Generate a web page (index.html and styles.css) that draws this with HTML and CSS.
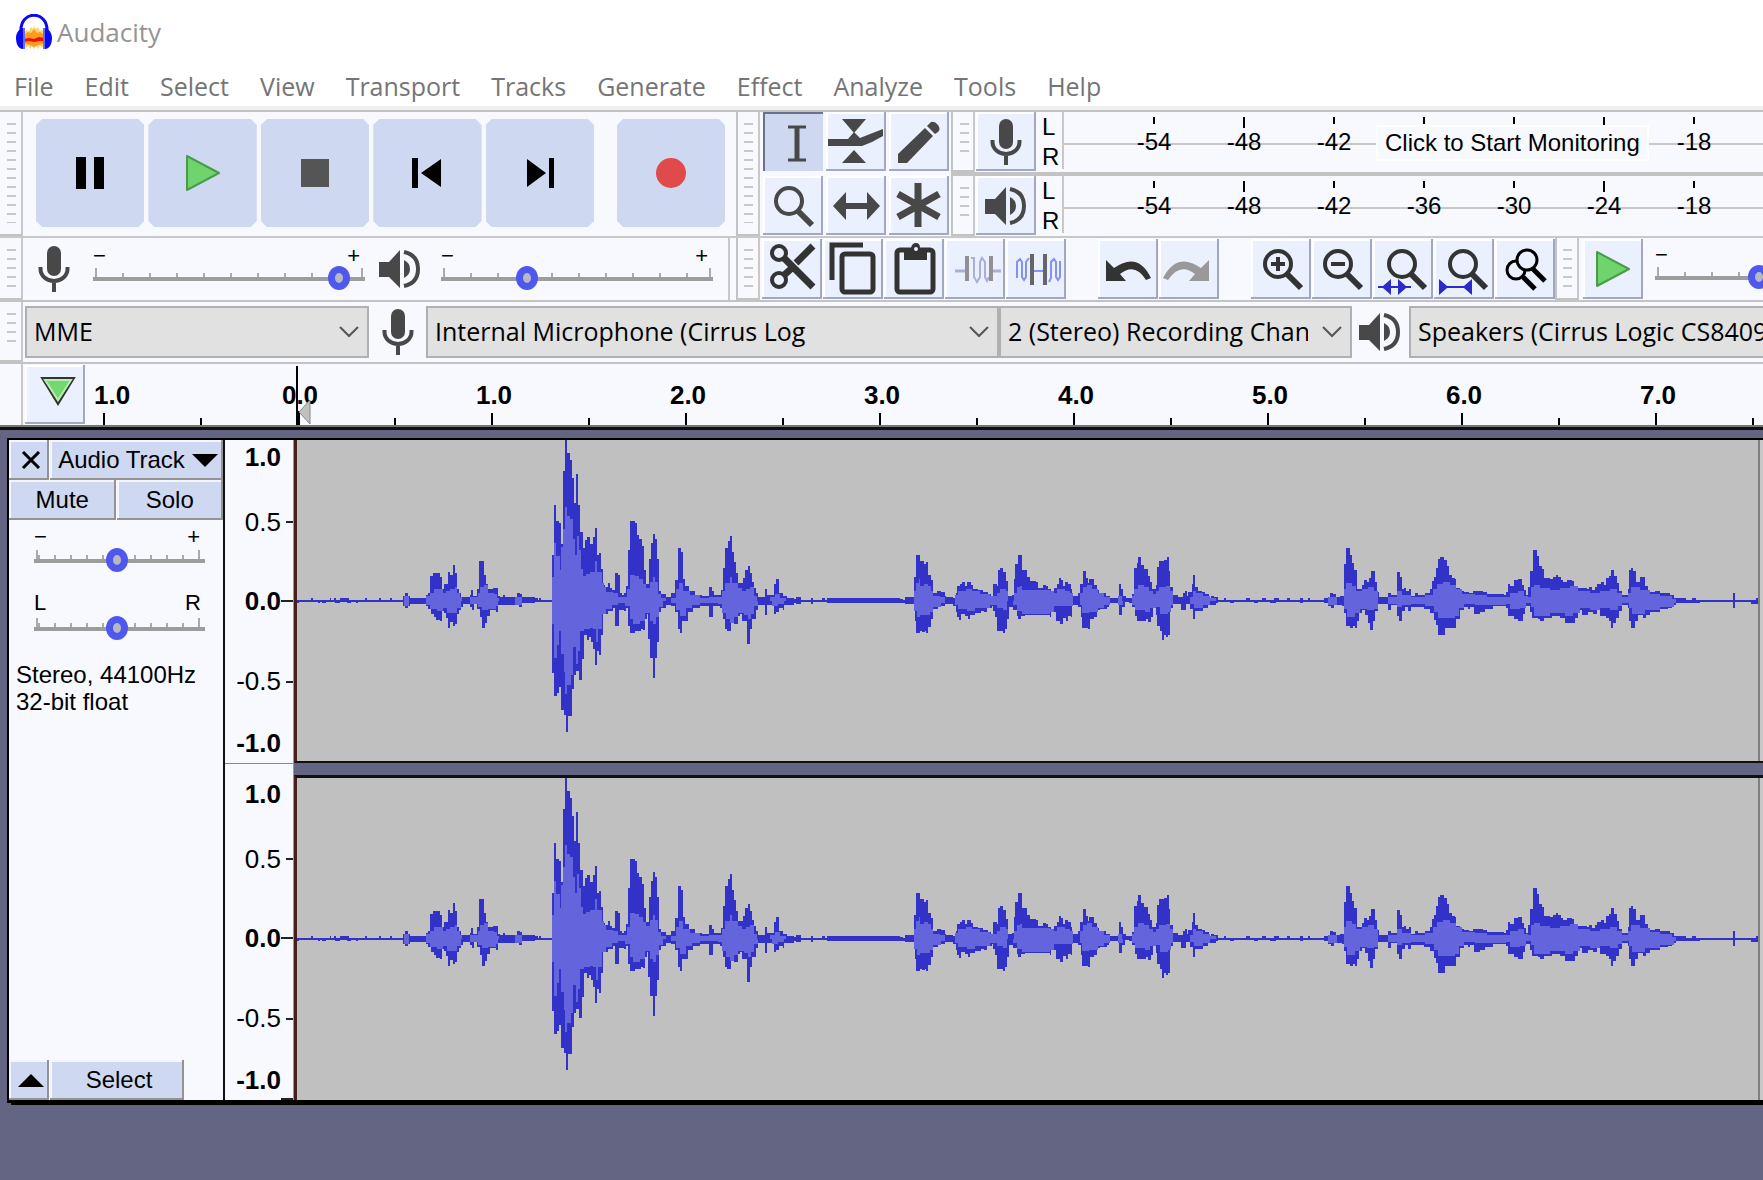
FILE: index.html
```html
<!DOCTYPE html>
<html lang="en">
<head>
<meta charset="utf-8">
<title>Audacity</title>
<link rel="stylesheet" href="styles.css">
</head>
<body>
<svg class="defs" aria-hidden="true">
  <symbol id="mic" viewBox="0 0 32 46"><rect x="9" y="0" width="14" height="30" rx="7" fill="#484848"/><path d="M2.500 21v2a13.500 12 0 0 0 27 0v-2M16 35v11" fill="none" stroke="#484848" stroke-width="4"/></symbol>
  <symbol id="speaker" viewBox="0 0 42 40"><path d="M0 13H10L21 1V39L10 28H0Z" fill="#484848"/><path d="M25 11q6 3 6 9t-6 9Z" fill="#484848"/><path d="M25 3q14 3 14 17T25 37" fill="none" stroke="#484848" stroke-width="4"/></symbol>
  <symbol id="play" viewBox="0 0 36 38"><path d="M2 2V36L34 19Z" fill="#6fd46c" stroke="#4c9a4c" stroke-width="2" stroke-linejoin="round"/></symbol>
  <symbol id="chevron" viewBox="0 0 20 12"><path d="M1 1L10 10L19 1" fill="none" stroke="#555" stroke-width="2"/></symbol>
</svg>

<header class="titlebar">
  <svg width="36" height="36" viewBox="0 0 36 36" aria-hidden="true">
    <path d="M8 18L11 16 13 17 15 13 17 15 18 12 20 15 22 13 24 17 26 16 28 18V31L26 34 24 31 22 35 20 32 18 35 16 32 14 35 12 31 10 34 8 31Z" fill="#ffd56b"/>
    <path d="M9 20L12 18 15 19 18 15 21 19 24 18 27 20V30L22 31 18 33 14 31 9 30Z" fill="#ff9d1a"/>
    <path d="M8 25L13 24 18 25 23 23 28 24V27L23 27 18 28 13 27 8 28Z" fill="#f20d0d"/>
    <path d="M5 17C4 -4 32 -4 31 17" fill="none" stroke="#0a0af0" stroke-width="3"/>
    <path d="M7 14V35C2 35 0 29 0 24S3 15 7 14ZM29 14V35C34 35 36 29 36 24S33 15 29 14Z" fill="#0a0af0"/>
    <path d="M8 14V35M28 14V35" stroke="#6c6cf0" stroke-width="2"/>
  </svg>
  <h1>Audacity</h1>
</header>

<nav class="menubar">
  <button>File</button><button>Edit</button><button>Select</button><button>View</button><button>Transport</button><button>Tracks</button><button>Generate</button><button>Effect</button><button>Analyze</button><button>Tools</button><button>Help</button>
</nav>

<section class="dock">
  <div class="bar bar-top">
    <span class="grip"></span>
    <div class="transport">
      <div class="transport-main">
        <button class="big" aria-label="Pause"><svg width="36" height="36"><path d="M4 2h10v32H4zM22 2h10v32H22z"/></svg></button>
        <button class="big" aria-label="Play"><svg width="36" height="38"><use href="#play"/></svg></button>
        <button class="big" aria-label="Stop"><svg width="36" height="36"><path d="M4 4h28v28H4z" fill="#555"/></svg></button>
        <button class="big" aria-label="Skip to start"><svg width="36" height="36"><path d="M3 3h6v30H3zM32 4V32L12 18Z"/></svg></button>
        <button class="big" aria-label="Skip to end"><svg width="36" height="36"><path d="M27 3h5v30h-5zM5 4V32L24 18Z"/></svg></button>
      </div>
      <button class="big record" aria-label="Record"><svg width="32" height="32"><circle cx="16" cy="16" r="15" fill="#e14a4a"/></svg></button>
    </div>
    <span class="grip inner"></span>
    <div class="tools">
      <button class="tb on" aria-label="Selection tool"><svg viewBox="0 0 60 59"><path d="M25 15H43M25 48H43" stroke="#484848" stroke-width="3"/><path d="M34 15V48" stroke="#484848" stroke-width="5"/></svg></button>
      <button class="tb" aria-label="Envelope tool"><svg viewBox="0 0 60 59"><path d="M16 7H40L28 21ZM16 51H40L28 38ZM2 27H22L28 20 34 26 44 22 57 17V24L46 30 36 34H2Z" fill="#484848"/></svg></button>
      <button class="tb" aria-label="Draw tool"><svg viewBox="0 0 60 59"><path d="M9 51V42L36 16 44 24 18 51ZM38 14L42 10Q46 9 49 13T49 20L46 22Z" fill="#484848"/></svg></button>
      <button class="tb" aria-label="Zoom tool"><svg viewBox="0 0 60 59"><circle cx="26" cy="25" r="13" fill="none" stroke="#484848" stroke-width="4"/><path d="M35 35L49 49" stroke="#484848" stroke-width="6"/></svg></button>
      <button class="tb" aria-label="Time shift tool"><svg viewBox="0 0 60 59"><path d="M7 30L20 16V27H41V16L54 30 41 44V33H20V44Z" fill="#484848"/></svg></button>
      <button class="tb" aria-label="Multi-tool"><svg viewBox="0 0 60 59"><path d="M29 7V51M9 18L50 41M50 18L9 41" stroke="#484848" stroke-width="7"/></svg></button>
    </div>
    <div class="meters">
      <div class="meter">
        <span class="grip inner"></span>
        <button class="tb" aria-label="Record meter"><svg class="mic" width="32" height="46"><use href="#mic"/></svg></button>
        <span class="lr"><span>L</span><span>R</span></span>
        <div class="scale">
          <span>-54</span><span class="major">-48</span><span>-42</span><span></span><span></span><span class="major"></span><span>-18</span><span></span>
          <button class="monitor">Click to Start Monitoring</button>
        </div>
      </div>
      <div class="meter">
        <span class="grip inner"></span>
        <button class="tb" aria-label="Playback meter"><svg class="spk" width="42" height="40"><use href="#speaker"/></svg></button>
        <span class="lr"><span>L</span><span>R</span></span>
        <div class="scale">
          <span>-54</span><span class="major">-48</span><span>-42</span><span>-36</span><span>-30</span><span class="major">-24</span><span>-18</span><span></span>
        </div>
      </div>
    </div>
  </div>

  <div class="bar bar-mid">
    <span class="grip"></span>
    <div class="mixer">
      <svg width="32" height="46" aria-hidden="true"><use href="#mic"/></svg>
      <div class="slider"><div class="ends"><span>−</span><span>+</span></div><input type="range" aria-label="Recording volume" min="0" max="100" value="94"></div>
      <svg width="42" height="40" aria-hidden="true"><use href="#speaker"/></svg>
      <div class="slider"><div class="ends"><span>−</span><span>+</span></div><input type="range" aria-label="Playback volume" min="0" max="100" value="30"></div>
    </div>
    <span class="grip inner"></span>
    <div class="edit">
      <div class="group">
        <button class="tb" aria-label="Cut"><svg viewBox="0 0 60 59"><g fill="none" stroke="#333"><circle cx="17" cy="13" r="7" stroke-width="4"/><circle cx="17" cy="40" r="7" stroke-width="4"/><path d="M21 17L51 47M21 36L30 28M34 23L51 6" stroke-width="7"/></g></svg></button>
        <button class="tb" aria-label="Copy"><svg viewBox="0 0 60 59"><path d="M9 40V5H40" fill="none" stroke="#333" stroke-width="5"/><rect x="19" y="14" width="31" height="38" rx="3" fill="none" stroke="#333" stroke-width="5"/></svg></button>
        <button class="tb" aria-label="Paste"><svg viewBox="0 0 60 59"><rect x="13" y="10" width="36" height="42" rx="3" fill="none" stroke="#333" stroke-width="5"/><path d="M20 8H27Q28 3 32 3T36 8H43V20H20Z" fill="#333"/><circle cx="32" cy="9" r="2" fill="#eaf0fe"/></svg></button>
        <button class="tb" aria-label="Trim"><svg viewBox="0 0 60 59"><path d="M10 31H22M47 31H56" stroke="#a9b0d6" stroke-width="3"/><path d="M26 18H29V37L32 42 35 37V22L37 18 40 22V37L42 41 44 37" fill="none" stroke="#a9b0d6" stroke-width="2"/><path d="M22 16V41M46 16V41" stroke="#919191" stroke-width="4"/></svg></button>
        <button class="tb" aria-label="Silence"><svg viewBox="0 0 60 59"><path d="M11 38V22L14 19 16 22V37L18 40 20 37V22L23 18M28 31H38M43 42L45 38V22L48 19 50 22V37L52 40 54 37V21" fill="none" stroke="#8490f2" stroke-width="2"/><path d="M26 14V45M39 14V45" stroke="#666" stroke-width="4"/></svg></button>
      </div>
      <div class="group">
        <button class="tb" aria-label="Undo"><svg viewBox="0 0 60 59"><path d="M8 20V41H28L22 34Q37 22 48 40L53 38Q40 11 16 28Z" fill="#333"/></svg></button>
        <button class="tb" aria-label="Redo"><svg viewBox="0 0 60 59"><path d="M50 20V41H30L36 34Q21 22 9 40L4 38Q18 11 42 28Z" fill="#999"/></svg></button>
      </div>
      <div class="group">
        <button class="tb" aria-label="Zoom in"><svg viewBox="0 0 60 59"><g fill="none" stroke="#333"><circle cx="27" cy="24" r="13" stroke-width="4"/><path d="M20 24H34M27 17V31" stroke-width="4"/><path d="M36 34L50 48" stroke-width="6"/></g></svg></button>
        <button class="tb" aria-label="Zoom out"><svg viewBox="0 0 60 59"><g fill="none" stroke="#333"><circle cx="26" cy="24" r="13" stroke-width="4"/><path d="M19 24H33" stroke-width="4"/><path d="M35 34L49 48" stroke-width="6"/></g></svg></button>
        <button class="tb" aria-label="Fit selection"><svg viewBox="0 0 60 59"><g fill="none" stroke="#333"><circle cx="29" cy="24" r="13" stroke-width="4"/><path d="M38 34L52 48" stroke-width="6"/></g><path d="M5 46H10L18 39V46H25V39L33 46H38V48H33L25 55V48H18V55L10 48H5Z" fill="#2b2bcb"/></svg></button>
        <button class="tb" aria-label="Fit project"><svg viewBox="0 0 60 59"><g fill="none" stroke="#333"><circle cx="29" cy="24" r="13" stroke-width="4"/><path d="M38 34L52 48" stroke-width="6"/></g><path d="M5 39L13 46H30L38 39V55L30 48H13L5 55Z" fill="#2b2bcb"/></svg></button>
        <button class="tb" aria-label="Zoom toggle"><svg viewBox="0 0 60 59"><g fill="none" stroke="#000"><circle cx="21" cy="30" r="9" stroke-width="3"/><path d="M28 37L40 49" stroke-width="5"/><circle cx="32" cy="20" r="10" fill="#eaf0fe" stroke-width="3"/><path d="M37 28L50 41" stroke-width="5"/></g></svg></button>
      </div>
    </div>
    <span class="grip inner"></span>
    <button class="tb play-speed" aria-label="Play at speed"><svg class="pl" width="36" height="38"><use href="#play"/></svg></button>
    <div class="slider speed"><div class="ends"><span>−</span></div><input type="range" aria-label="Playback speed" min="0" max="100" value="37"></div>
  </div>

  <div class="bar bar-device">
    <span class="grip"></span>
    <div class="combo host"><select aria-label="Audio host"><option>MME</option></select><svg width="20" height="12"><use href="#chevron"/></svg></div>
    <svg class="dev-mic" width="32" height="46" aria-hidden="true"><use href="#mic"/></svg>
    <div class="combo rec"><select aria-label="Recording device"><option>Internal Microphone (Cirrus Log</option></select><svg width="20" height="12"><use href="#chevron"/></svg></div>
    <div class="combo chan"><select aria-label="Recording channels"><option>2 (Stereo) Recording Channels</option></select><svg width="20" height="12"><use href="#chevron"/></svg></div>
    <svg class="dev-spk" width="42" height="40" aria-hidden="true"><use href="#speaker"/></svg>
    <div class="combo out"><select aria-label="Playback device"><option>Speakers (Cirrus Logic CS8409</option></select></div>
  </div>

  <div class="bar bar-time">
    <span class="blank"></span>
    <button class="tb pin" aria-label="Pinned play head"><svg viewBox="0 0 60 59"><path d="M17 13H49L33 39Z" fill="#74d772" stroke="#333" stroke-width="2"/><path d="M20 15H46L33 35Z" fill="none" stroke="#b6eeaa" stroke-width="2"/></svg></button>
    <div class="timeline">
      <span class="first">1.0</span><span>0.0</span><span>1.0</span><span>2.0</span><span>3.0</span><span>4.0</span><span>5.0</span><span>6.0</span><span>7.0</span>
      <svg class="playhead" width="16" height="60" aria-hidden="true"><path d="M1 0V60" stroke="#000" stroke-width="2"/><path d="M2 45V60" stroke="#000" stroke-width="4"/><path d="M14 34V58L3 46Z" fill="#c0c0c0" stroke="#888"/></svg>
    </div>
  </div>
</section>

<main class="workspace">
  <article class="track">
    <aside class="panel">
      <div class="row"><button class="pb close" aria-label="Close track"><svg width="20" height="18"><path d="M2 1L18 17M18 1L2 17" stroke="#000" stroke-width="3"/></svg></button><button class="pb name">Audio Track<svg width="26" height="13"><path d="M0 0H26L13 13Z"/></svg></button></div>
      <div class="row"><button class="pb half">Mute</button><button class="pb half">Solo</button></div>
      <div class="slider small"><div class="ends"><span>−</span><span>+</span></div><input type="range" aria-label="Gain" min="0" max="100" value="48"></div>
      <div class="slider small pan"><div class="ends"><span>L</span><span>R</span></div><input type="range" aria-label="Pan" min="0" max="100" value="48"></div>
      <p>Stereo, 44100Hz<br>32-bit float</p>
      <div class="row foot"><button class="pb close" aria-label="Collapse"><svg width="26" height="13"><path d="M0 13H26L13 0Z"/></svg></button><button class="pb select">Select</button></div>
    </aside>
    <div class="channels">
      <div class="channel">
        <div class="vruler"><b>1.0</b><span class="t">0.5</span><b class="t zero">0.0</b><span class="t">-0.5</span><b>-1.0</b></div>
        <div class="wave"><svg class="clip" viewBox="297 441 1461 322"></svg></div>
      </div>
      <div class="channel">
        <div class="vruler"><b>1.0</b><span class="t">0.5</span><b class="t zero">0.0</b><span class="t">-0.5</span><b>-1.0</b></div>
        <div class="wave"><svg class="clip" viewBox="297 441 1461 322"></svg></div>
      </div>
    </div>
  </article>
</main>
<script src="wave.js"></script>
</body>
</html>
```
FILE: styles.css
```css
* { box-sizing: border-box; }
body {
  margin: 0;
  min-height: 100vh;
  display: flex;
  flex-direction: column;
  background: #fff;
  font-family: "Liberation Sans", Arial, sans-serif;
  font-size: 24px;
  overflow-x: hidden;
}
button { font: inherit; color: inherit; border: 0; padding: 0; background: none; }
svg { display: block; flex: none; }
.defs { position: absolute; width: 0; height: 0; }

.titlebar { display: flex; align-items: center; gap: 5px; height: 64px; padding: 0 16px; }
.titlebar h1 { margin: 0; font: 400 26px/34px "Open Sans", sans-serif; color: #949494; }
.menubar { display: flex; gap: 31px; height: 46px; padding: 0 14px; border-bottom: 4px solid #f0f0f0; }
.menubar button { height: 44px; font: 400 25px/44px "Open Sans", sans-serif; color: #757575; }

.dock { background: #f8f9ff; border-top: 2px solid #c3c3c3; overflow: hidden; }
.bar { display: flex; overflow: hidden; }
.bar-top { height: 126px; border-bottom: 2px solid #c8c8c8; }
.bar-mid { height: 64px; border-bottom: 2px solid #c3c3c3; }
.bar-device { height: 62px; align-items: center; border-bottom: 2px solid #c3c3c3; }
.bar-time { height: 63px; border-bottom: 2px solid #777; }

.grip {
  flex: 0 0 23px;
  align-self: stretch;
  border-right: 2px solid #c8c8c8;
  border-bottom: 2px solid #c3c3c3;
  padding: 11px 5px 11px 7px;
  background: repeating-linear-gradient(#c8c8c8 0 2px, transparent 2px 9px) content-box;
}
.grip.inner { border-left: 2px solid #c3c3c3; flex-basis: 24px; padding: 11px 5px 11px 6px; }
.meter .grip.inner { padding: 11px 4px 11px 7px; }

.transport { display: flex; gap: 23px; flex: 0 0 713px; padding: 7px 0 0 13px; }
.transport-main { display: grid; grid-template-columns: repeat(5, 1fr); gap: 4px; width: 558px; }
.big {
  display: flex; align-items: center; justify-content: center;
  height: 108px;
  background: #ced9f1;
  clip-path: polygon(6px 0, calc(100% - 6px) 0, 100% 6px, 100% calc(100% - 6px), calc(100% - 6px) 100%, 6px 100%, 0 calc(100% - 6px), 0 6px);
}
.record { width: 108px; }

.tb {
  display: flex; align-items: center; justify-content: center;
  flex: none;
  width: 60px; height: 59px;
  background: #eaf0fe;
  box-shadow: inset -2px -2px #a2a8bd, inset 2px 2px #fff;
}
.tb svg { width: 60px; height: 59px; }
.tb svg.mic { width: 32px; height: 46px; }
.tb svg.spk { width: 42px; height: 40px; }
.tb svg.pl { width: 36px; height: 38px; }
.tb.on { background: #ced9f1; box-shadow: inset 2px 2px #6b7188; }
.tools { display: grid; grid-template-columns: repeat(3, 60px); gap: 5px 3px; padding: 0 2px 0 3px; align-content: start; }

.meters { flex: 1; min-width: 0; }
.meter { display: flex; height: 64px; border-bottom: 4px solid #c3c3c3; overflow: hidden; }
.meter:last-child { height: 60px; border-bottom: 0; }
.meter .tb { margin-left: 1px; }
.lr { flex: 0 0 26px; display: flex; flex-direction: column; padding-left: 6px; line-height: 30px; }
.scale {
  position: relative;
  flex: 1;
  display: flex;
  overflow: hidden;
  margin-bottom: 3px;
  padding-left: 45px;
  border-left: 2px solid #c8c8c8;
  background: linear-gradient(#c8c8c8, #c8c8c8) 0 31px / 100% 2px no-repeat;
}
.scale span {
  flex: 0 0 90px;
  padding-top: 16px;
  line-height: 28px;
  text-align: center;
  background: linear-gradient(#000, #000) 50% 5px / 2px 7px no-repeat;
}
.scale .major { background-size: 2px 11px; }
.monitor {
  position: absolute;
  left: 312px; top: 13px;
  height: 36px;
  padding: 0 7px;
  background: #f8f9ff;
  border: 2px solid #fff;
  line-height: 32px;
}

.mixer { display: flex; align-items: center; flex: 0 0 707px; padding-left: 15px; border-right: 2px solid #c8c8c8; }
.bar-mid .mixer + .grip { margin-left: 6px; }
.slider { width: 272px; flex: none; }
.mixer .slider { margin-left: 23px; }
.mixer .slider + svg { margin-left: 14px; }
.mixer svg + .slider:last-child { margin-left: 20px; }
.ends { display: flex; justify-content: space-between; height: 18px; line-height: 18px; font-size: 22px; padding: 0 5px 0 0; }
.slider input {
  -webkit-appearance: none; appearance: none;
  display: block;
  width: 100%; height: 26px;
  margin: 0;
  background:
    linear-gradient(#9d9d9d, #9d9d9d) 0 12px / 100% 4px no-repeat,
    linear-gradient(#aaa, #aaa) 2px 3px / 2px 9px no-repeat,
    linear-gradient(#aaa, #aaa) calc(100% - 2px) 3px / 2px 9px no-repeat,
    repeating-linear-gradient(90deg, #aaa 0 2px, transparent 2px 27px) 2px 8px / 100% 4px no-repeat;
}
.slider input::-webkit-slider-thumb {
  -webkit-appearance: none;
  width: 22px; height: 24px;
  border: 7px solid #4f58ee;
  border-radius: 50%;
  background: #b8b8c4;
}
.edit { display: flex; gap: 32px; padding-left: 2px; }
.group { display: flex; gap: 1px; }
.bar-mid .tb { height: 60px; margin-top: 1px; }
.play-speed { margin-left: 4px; }
.speed { margin: 8px 0 0 12px; }

.combo { position: relative; display: flex; flex: none; height: 52px; }
.combo select {
  -webkit-appearance: none; appearance: none;
  width: 100%;
  padding: 0 42px 2px 7px;
  border: 2px solid #b0b0b0;
  border-radius: 0;
  background: #e1e1e1;
  color: #000;
  font: 400 25px "Open Sans", sans-serif;
}
.combo svg { position: absolute; right: 10px; top: 20px; }
.host { width: 344px; margin-left: 2px; }
.dev-mic { margin: 0 12px 0 13px; }
.rec { width: 573px; }
.chan { width: 353px; }
.dev-spk { margin: 0 8px 0 7px; }
.out { width: 500px; }

.blank { flex: 0 0 23px; border-right: 2px solid #c8c8c8; }
.pin { margin: 1px 0 0 2px; }
.timeline {
  position: relative;
  flex: 1;
  display: flex;
  overflow: hidden;
  font-weight: 700;
  font-size: 26px;
  background:
    repeating-linear-gradient(90deg, #000 0 2px, transparent 2px 194px) 18px 100% / 100% 12px no-repeat,
    repeating-linear-gradient(90deg, #000 0 2px, transparent 2px 194px) 115px 100% / 100% 7px no-repeat;
}
.timeline span { flex: 0 0 194px; line-height: 62px; text-align: center; }
.timeline .first { flex-basis: 118px; text-align: left; padding-left: 9px; }
.playhead { position: absolute; left: 211px; top: 2px; }

.workspace { flex: 1; background: #636583; border-top: 3px solid #111; padding: 8px 0 72px 7px; }
.track { display: flex; border: solid #000; border-width: 2px 0 3px 2px; box-shadow: 4px 2px #000; }
.panel { flex: 0 0 216px; display: flex; flex-direction: column; background: #f8f9ff; border-right: 2px solid #111; }
.row { display: flex; height: 40px; gap: 1px; }
.pb {
  display: flex; align-items: center; justify-content: center;
  height: 40px;
  background: #ced9f1;
  box-shadow: inset -2px -2px #939393, inset 2px 2px #f4f6ff;
}
.close { width: 40px; padding-left: 4px; }
.name { flex: 1; gap: 7px; padding-left: 3px; }
.half { flex: 1; }
.small { width: 171px; margin: 8px 0 0 25px; }
.small .ends { height: 19px; line-height: 18px; }
.small input {
  background:
    linear-gradient(#9d9d9d, #9d9d9d) 0 12px / 100% 4px no-repeat,
    linear-gradient(#aaa, #aaa) 2px 3px / 2px 9px no-repeat,
    linear-gradient(#aaa, #aaa) calc(100% - 5px) 3px / 2px 9px no-repeat,
    repeating-linear-gradient(90deg, #aaa 0 2px, transparent 2px 16px) 4px 8px / 161px 4px no-repeat;
}
.pan { margin-top: 20px; }
.pan .ends { height: 22px; line-height: 20px; padding: 0 4px 0 0; }
.panel p { margin: 20px 0 0 7px; line-height: 27px; }
.foot { margin-top: auto; }
.select { width: 134px; padding-left: 4px; }

.channels { flex: 1; min-width: 0; display: flex; flex-direction: column; }
.channel { display: flex; height: 323px; }
.channel + .channel { height: 337px; background: #636583; }
.vruler {
  flex: 0 0 69px;
  display: grid;
  grid-template-rows: 34px 96px 62px 99px 24px;
  align-content: start;
  background: #f8f9ff;
  font-size: 26px;
  text-align: right;
  border-right: 1px solid #999;
}
.vruler > * { display: flex; align-items: center; justify-content: flex-end; padding-right: 12px; }
.t { background: linear-gradient(#222, #222) 100% 50% / 7px 2px no-repeat; }
.t.zero { background-size: 12px 2px; }
.channel + .channel .vruler { border-top: 1px solid #888; padding-top: 13px; background: linear-gradient(#222, #222) 100% 100% / 12px 2px no-repeat #f8f9ff; }
.wave { flex: 1; min-width: 0; background: #c8c8c8; border-left: 3px solid #45201f; border-bottom: 2px solid #111; overflow: hidden; }
.channel + .channel .wave { border-bottom: 0; margin-top: 12px; border-top: 3px solid #111; }
.clip { width: 1463px; height: 322px; background: #c0c0c0; border-right: 2px solid #808080; }
```
FILE: wave.js
```js
// Envelope samples as "x:y" steps; the zero line is at y = 602.
const PEAK_TOP = "297:601 311:599 313:601 330:599 331:601 334:599 336:601 340:599 349:601 365:599 367:601 379:599 381:601 390:599 392:601 403:597 405:594 408:597 410:599 426:596 428:594 430:577 433:574 437:574 440:578 442:590 444:585 448:573 450:576 453:566 455:574 457:590 459:594 461:598 470:596 471:591 473:597 477:590 479:562 484:576 486:585 488:590 493:589 498:597 500:598 503:596 505:598 515:598 517:594 520:595 522:598 535:599 538:601 539:599 541:601 552:556 554:506 556:522 559:524 561:545 563:472 565:441 567:454 570:461 572:479 574:504 576:475 578:506 580:533 583:549 585:541 587:538 590:545 593:538 595:529 597:556 599:554 601:570 603:586 605:588 608:584 610:589 612:591 615:574 618:576 620:594 622:596 624:594 626:587 628:551 630:522 635:524 637:536 639:540 642:547 644:571 646:585 649:560 651:544 653:535 655:540 657:560 659:592 661:595 666:598 671:594 675:581 678:549 681:553 683:580 685:587 689:592 695:596 702:597 709:588 712:592 714:596 721:591 723:569 725:549 728:542 730:537 732:553 734:563 736:574 738:584 743:579 745:571 748:567 750:574 752:583 754:589 756:594 758:598 765:590 767:596 774:585 776:580 779:594 783:597 787:599 794:600 796:598 801:601 811:599 813:601 822:599 825:601 827:599 900:600 903:601 905:598 914:578 916:556 920:562 924:565 926:563 928:576 931:581 933:594 937:592 941:593 945:597 946:598 953:599 956:594 957:587 960:585 962:583 965:587 967:583 971:586 973:590 978:591 983:593 988:595 991:597 993:585 997:587 998:571 1000:569 1003:573 1006:582 1008:597 1012:596 1014:580 1015:565 1018:556 1021:556 1022:571 1027:578 1030:582 1036:583 1038:589 1043:586 1046:587 1048:590 1051:594 1054:589 1057:585 1059:579 1061:581 1063:587 1065:583 1068:585 1071:590 1072:597 1078:594 1080:585 1083:572 1086:579 1088:584 1089:580 1094:586 1097:591 1099:597 1103:594 1106:597 1110:599 1119:585 1121:590 1123:597 1126:599 1132:595 1134:569 1137:564 1138:558 1141:566 1144:570 1148:577 1150:583 1152:590 1156:586 1157:568 1159:562 1164:561 1167:558 1169:572 1170:588 1173:596 1178:598 1183:594 1185:592 1187:597 1188:593 1192:585 1193:576 1195:588 1198:592 1202:593 1205:595 1209:599 1211:597 1214:598 1218:601 1224:599 1226:601 1246:599 1250:601 1262:599 1266:601 1274:599 1279:601 1287:599 1290:601 1300:599 1303:601 1308:599 1310:601 1324:599 1328:598 1330:594 1333:595 1336:598 1340:597 1344:565 1346:549 1350:556 1352:564 1354:571 1357:590 1362:586 1364:581 1367:583 1369:579 1371:572 1375:583 1377:593 1379:598 1388:594 1391:596 1397:573 1400:578 1402:590 1404:589 1406:592 1409:590 1411:597 1415:594 1418:596 1425:594 1430:590 1432:582 1434:578 1436:569 1438:560 1440:558 1444:561 1447:567 1449:576 1452:579 1455:580 1456:589 1460:592 1464:593 1469:594 1473:592 1483:593 1487:595 1504:596 1506:593 1508:585 1510:587 1514:581 1518:580 1522:586 1524:591 1526:596 1528:588 1530:572 1533:551 1537:557 1539:567 1542:570 1544:579 1550:580 1553:578 1556:576 1558:578 1561:581 1563:583 1567:581 1572:582 1574:587 1577:589 1587:590 1589:588 1592:591 1595:588 1597:585 1601:583 1604:586 1606:579 1609:577 1611:571 1614:577 1617:584 1619:592 1622:596 1628:590 1629:571 1631:569 1633:572 1636:583 1640:578 1645:587 1648:593 1655:592 1660:594 1670:596 1674:599 1686:601 1692:599 1696:601 1733:594 1735:601 1756:599 1758:599";
const PEAK_BOTTOM = "297:604 299:603 318:604 320:603 322:604 326:603 335:604 340:603 347:604 351:603 356:604 358:603 403:607 405:609 408:607 410:605 426:607 428:610 431:615 434:618 436:621 440:622 442:612 444:614 446:619 448:629 450:623 453:627 455:625 457:615 459:611 461:608 463:605 470:608 472:611 474:605 477:610 480:618 482:629 485:624 487:617 490:611 496:613 498:606 515:605 519:608 522:604 535:603 552:674 554:697 557:694 559:688 561:711 564:716 566:733 568:717 572:690 574:676 576:672 579:681 582:660 584:636 587:641 589:638 591:643 593:650 595:666 597:652 599:656 601:636 603:613 605:615 608:612 613:609 615:627 619:611 624:612 626:609 628:627 630:634 635:632 641:630 643:631 645:620 647:615 648:640 650:659 653:679 655:659 657:643 659:613 661:609 666:606 671:607 675:613 678:630 680:634 682:622 688:613 693:609 700:607 709:618 713:607 720:609 723:620 725:630 727:632 731:622 734:625 738:617 740:615 742:622 747:645 750:630 752:620 756:611 758:606 765:616 767:606 774:615 776:613 779:609 783:611 784:606 794:604 796:605 801:603 811:605 813:603 827:604 905:605 914:611 915:622 916:634 920:632 922:633 925:632 926:634 928:628 931:620 933:610 938:607 945:605 953:607 956:613 957:618 959:621 961:615 965:617 968:620 970:616 975:614 981:612 984:613 987:609 992:607 993:612 995:618 997:632 1001:632 1003:634 1005:630 1007:620 1009:608 1013:611 1017:617 1018:620 1021:617 1025:616 1050:618 1051:613 1056:622 1060:625 1063:619 1066:622 1068:617 1071:618 1072:606 1078:608 1081:618 1082:629 1088:630 1090:620 1094:618 1097:611 1100:610 1107:608 1109:604 1118:606 1119:616 1122:608 1125:603 1129:604 1132:608 1135:617 1137:622 1145:622 1146:620 1148:623 1151:618 1153:608 1156:616 1157:627 1160:632 1162:641 1164:636 1166:638 1168:636 1170:609 1173:605 1181:611 1186:605 1190:610 1193:620 1195:612 1203:609 1208:606 1216:604 1218:603 1230:604 1234:603 1254:604 1258:603 1270:604 1276:603 1300:604 1303:603 1324:604 1328:607 1331:609 1334:606 1342:607 1344:614 1346:627 1350:629 1353:627 1355:629 1357:622 1359:614 1362:611 1365:616 1368:624 1370:631 1373:622 1375:612 1378:605 1388:611 1391:606 1397:617 1399:622 1402:612 1405:608 1408:612 1411:608 1424:610 1430:614 1434:621 1436:626 1438:636 1445:629 1456:620 1460:611 1464:608 1468:610 1470:608 1474:615 1480:613 1485:610 1493:607 1506:609 1508:617 1514:620 1518:622 1523:615 1525:607 1530:613 1532:619 1538:620 1540:622 1544:619 1552:617 1560:619 1565:624 1571:624 1575:619 1578:611 1582:616 1588:613 1593:615 1597:611 1600:617 1606:619 1609:622 1611:629 1613:624 1616:619 1619:612 1622:606 1628:609 1629:622 1631:629 1635:622 1638:616 1643:619 1646:616 1650:613 1660:610 1668:609 1672:606 1676:604 1700:603 1733:609 1735:603 1751:605 1758:605";
const RMS_TOP = "297:602 404:597 409:602 426:597 430:594 434:590 440:590 443:594 446:592 450:590 455:588 457:594 460:598 462:602 470:598 478:594 480:588 484:586 488:594 494:595 497:599 499:602 515:598 522:602 552:578 554:544 556:557 560:571 561:548 563:530 565:508 567:517 570:520 573:540 575:556 577:537 579:551 581:570 583:577 586:575 590:573 595:562 597:573 602:584 604:588 606:593 613:594 618:598 627:590 630:576 635:577 639:580 643:585 646:589 650:583 653:578 655:583 658:595 661:599 666:602 671:599 676:590 679:584 683:592 690:596 700:599 709:598 715:598 722:592 725:584 730:578 732:584 738:589 742:592 746:590 750:588 754:597 757:602 770:598 775:595 780:599 786:602 914:592 916:584 919:580 920:587 924:585 928:587 931:592 933:597 940:598 945:602 955:596 958:592 966:590 972:592 980:595 990:597 997:594 1000:590 1006:592 1008:602 1014:594 1017:588 1020:587 1022:591 1050:592 1054:594 1057:590 1065:592 1070:594 1073:602 1080:594 1083:588 1087:586 1092:590 1098:594 1104:598 1110:602 1118:597 1122:602 1132:597 1134:590 1138:586 1144:588 1149:592 1153:595 1156:592 1159:588 1166:587 1170:592 1173:602 1190:598 1193:592 1196:594 1203:597 1210:599 1216:602 1328:598 1337:602 1344:590 1346:584 1352:587 1356:592 1362:590 1368:588 1374:592 1378:602 1388:598 1397:592 1402:596 1411:598 1425:596 1433:590 1437:585 1443:583 1450:586 1456:590 1462:595 1475:596 1487:598 1506:598 1510:594 1518:592 1524:597 1528:598 1531:588 1534:586 1540:589 1550:591 1560:589 1570:587 1578:592 1590:594 1600:592 1610:590 1617:594 1622:598 1628:594 1631:588 1640:591 1650:595 1660:597 1672:600 1676:602 1758:602";
const RMS_BOTTOM = "297:602 404:607 409:602 426:606 430:610 437:612 443:609 447:614 453:614 457:609 461:602 470:605 478:608 482:611 488:610 496:607 498:602 515:606 522:602 552:625 554:659 557:646 559:632 561:655 564:673 565:695 567:686 571:676 573:648 576:665 578:652 580:632 584:630 590:629 593:630 596:643 598:630 602:615 606:610 612:606 618:604 625:607 630:620 633:625 640:622 645:614 650:622 653:625 656:618 659:608 663:602 671:604 676:611 680:617 686:609 692:606 700:604 718:605 722:614 726:620 730:624 734:618 738:614 744:616 748:620 751:615 754:607 758:602 772:607 778:605 784:602 914:612 917:618 920:616 930:613 933:608 941:604 945:602 955:606 958:610 967:612 975:609 990:606 997:609 1003:611 1007:602 1013:606 1017:612 1022:615 1050:613 1054:607 1070:607 1073:602 1080:606 1082:614 1089:613 1098:609 1104:606 1110:602 1118:606 1123:602 1132:606 1135:611 1145:613 1150:609 1156:608 1160:615 1168:613 1171:606 1173:602 1190:605 1194:609 1203:606 1210:602 1328:606 1337:602 1344:610 1347:618 1355:614 1360:610 1367:611 1374:610 1378:602 1388:605 1397:608 1402:606 1411:605 1425:607 1434:613 1438:619 1455:617 1459:609 1464:605 1475:606 1506:605 1510:610 1520:609 1526:604 1531:608 1534:617 1550:614 1565:617 1573:614 1580:609 1590:611 1600:609 1610:611 1618:607 1622:604 1629:609 1632:615 1645:611 1660:608 1674:604 1676:602 1758:602";

function stepPath(data) {
  let d = "M297 602";
  for (const pair of data.split(" ")) {
    const [x, y] = pair.split(":");
    d += `H${x}V${y}`;
  }
  return d + "V602Z";
}

for (const svg of document.querySelectorAll(".clip")) {
  svg.innerHTML =
    `<path fill="#3232c8" d="${stepPath(PEAK_TOP)}${stepPath(PEAK_BOTTOM)}"/>` +
    `<path fill="#6464dc" d="${stepPath(RMS_TOP)}${stepPath(RMS_BOTTOM)}"/>`;
}
```
